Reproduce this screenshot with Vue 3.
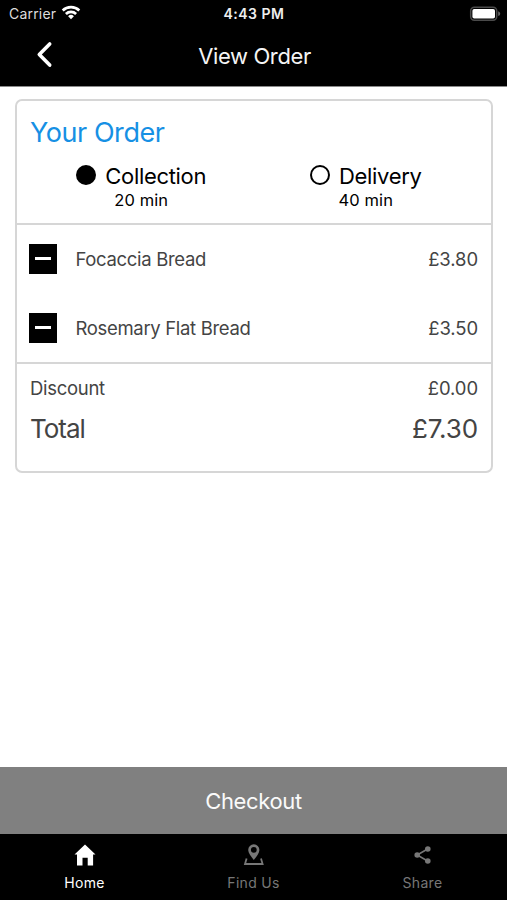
<script setup>
const options = [
  { name: 'Collection', time: '20 min', selected: true },
  { name: 'Delivery', time: '40 min', selected: false }
]

const items = [
  { name: 'Focaccia Bread', price: '£3.80' },
  { name: 'Rosemary Flat Bread', price: '£3.50' }
]
</script>

<template>
  <div class="screen">
    <header class="header">
      <div class="status">
        <div class="carrier">
          <span>Carrier</span>
          <svg class="wifi" width="20" height="15" viewBox="0 0 20 15" fill="none" stroke="#fff" stroke-width="2.7">
            <path d="M1.7 5.5a12 12 0 0 1 16.6 0" />
            <path d="M4.9 9a7.3 7.3 0 0 1 10.2 0" />
            <path d="M10 14.2 7.1 11.3a4.1 4.1 0 0 1 5.8 0Z" fill="#fff" stroke="none" />
          </svg>
        </div>
        <span class="clock">4:43 PM</span>
        <svg class="battery" width="32" height="16" viewBox="0 0 32 16">
          <rect x="1.7" y="1.2" width="26" height="13" rx="3.6" fill="none" stroke="#4a4a4a" stroke-width="1.5" />
          <rect x="3.4" y="2.9" width="22.6" height="9.6" rx="1.8" fill="#fff" />
          <path d="M29.2 5.3v4.8q2-.8 2-2.4t-2-2.4Z" fill="#666" />
        </svg>
      </div>
      <div class="nav">
        <svg class="back" width="17" height="27" viewBox="0 0 17 27" fill="none" stroke="#fff" stroke-width="3.6" stroke-linecap="round" stroke-linejoin="round">
          <path d="M13.7 3 3.3 13.5l10.4 10.6" />
        </svg>
        <h1 class="title">View Order</h1>
        <span></span>
      </div>
    </header>

    <main class="content">
      <section class="card">
        <div class="intro">
          <h2 class="heading">Your Order</h2>
          <div class="options">
            <div v-for="o in options" :key="o.name" class="option">
              <div class="choice">
                <span class="radio" :class="{ on: o.selected }"></span>
                <span class="choice-name">{{ o.name }}</span>
              </div>
              <span class="time">{{ o.time }}</span>
            </div>
          </div>
        </div>
        <ul class="items">
          <li v-for="i in items" :key="i.name" class="item">
            <button class="remove" type="button"><span class="dash"></span></button>
            <span class="item-name">{{ i.name }}</span>
            <span class="price">{{ i.price }}</span>
          </li>
        </ul>
        <div class="summary">
          <div class="row discount"><span class="discount-label">Discount</span><span class="price">£0.00</span></div>
          <div class="row total"><span class="total-label">Total</span><span class="total-price">£7.30</span></div>
        </div>
      </section>
    </main>

    <button class="checkout" type="button"><span>Checkout</span></button>

    <nav class="tabs">
      <div class="tab active">
        <svg class="icon" width="24" height="24" viewBox="0 0 24 24" fill="currentColor">
          <path d="M12 1.6 22.5 11.6H20.1V22.4H14.7V14.8H9.5V22.4H4V11.6H1.5Z" />
        </svg>
        <span>Home</span>
      </div>
      <div class="tab">
        <svg class="icon" width="24" height="24" viewBox="0 0 24 24" fill="currentColor">
          <path fill-rule="evenodd" d="M11.8 17C9 13.2 6.2 9.9 6.2 6.9a5.6 5.6 0 0 1 11.2 0c0 3-2.8 6.3-5.6 10.1ZM11.8 3.9a2.9 2.9 0 1 0 0 5.8a2.9 2.9 0 0 0 0-5.8Z" />
          <path d="M4.6 15.5 3 21H20.6L19 15.5" fill="none" stroke="currentColor" stroke-width="1.8" />
        </svg>
        <span>Find Us</span>
      </div>
      <div class="tab">
        <svg class="icon" width="24" height="24" viewBox="0 0 24 24" fill="currentColor">
          <path d="M16.6 6 6.2 12l10.4 6" fill="none" stroke="currentColor" stroke-width="1.6" />
          <circle cx="16.8" cy="6" r="2.8" />
          <circle cx="6.2" cy="12" r="2.8" />
          <circle cx="16.8" cy="18" r="2.8" />
        </svg>
        <span>Share</span>
      </div>
    </nav>
  </div>
</template>

<style>
body {
  margin: 0;
  background: #fff;
}
</style>

<style scoped>
.screen {
  display: flex;
  flex-direction: column;
  height: 900px;
  overflow: hidden;
  font-family: Inter, "Liberation Sans", sans-serif;
  color: #000;
}
h1, h2, ul {
  margin: 0;
  padding: 0;
  font-weight: 400;
}
button {
  border: 0;
  padding: 0;
  border-radius: 0;
  font-family: inherit;
}
svg {
  display: block;
}
span {
  white-space: nowrap;
}
.header {
  box-sizing: border-box;
  height: 87px;
  background: #000;
  border-bottom: 1px solid #8a8a8a;
  color: #fff;
}
.status {
  display: grid;
  grid-template-columns: 1fr auto 1fr;
  align-items: center;
  height: 27px;
  padding: 0 6px 0 9px;
  font-size: 14px;
}
.carrier {
  display: flex;
  align-items: center;
  gap: 5px;
  color: #ddd;
  letter-spacing: 0.2px;
}
.wifi {
  margin-top: -3px;
}
.clock {
  font-size: 14px;
  font-weight: 600;
  color: #eee;
  letter-spacing: 0.5px;
  padding-right: 2px;
}
.battery {
  justify-self: end;
}
.nav {
  display: grid;
  grid-template-columns: 1fr auto 1fr;
  align-items: center;
  height: 58px;
}
.back {
  margin: -4px 0 0 36px;
}
.title {
  font-size: 22px;
  line-height: 28px;
  color: #f5f5f5;
  padding-left: 2px;
  letter-spacing: -0.38px;
}
.content {
  flex: 1;
  padding: 12px 14px 0 15px;
}
.card {
  box-sizing: border-box;
  height: 374px;
  border: 2px solid #d6d6d6;
  border-radius: 7px;
}
.intro {
  box-sizing: border-box;
  height: 124px;
  padding-top: 15px;
  border-bottom: 2px solid #d6d6d6;
}
.heading {
  padding-left: 13px;
  font-size: 27px;
  line-height: 34px;
  letter-spacing: -0.45px;
  color: #1690e4;
}
.options {
  display: grid;
  grid-template-columns: 1fr 1fr;
  padding: 13px 13px 0 12px;
}
.option {
  display: flex;
  flex-direction: column;
  align-items: center;
}
.choice {
  display: flex;
  align-items: center;
  gap: 9px;
}
.radio {
  box-sizing: border-box;
  width: 20px;
  height: 20px;
  margin-top: -2px;
  border: 2px solid #000;
  border-radius: 50%;
}
.radio.on {
  background: #000;
}
.choice-name {
  font-size: 22px;
  line-height: 26px;
  letter-spacing: -0.32px;
}
.time {
  font-size: 16.5px;
  line-height: 22px;
  letter-spacing: 0.1px;
}
.items {
  box-sizing: border-box;
  height: 139px;
  list-style: none;
  border-bottom: 2px solid #d6d6d6;
}
.item {
  box-sizing: border-box;
  display: flex;
  align-items: center;
  height: 69px;
  padding: 0 13px 2px 12px;
  font-size: 18.5px;
  color: #444;
}
.remove {
  display: flex;
  justify-content: center;
  width: 28px;
  height: 30px;
  padding-top: 13px;
  box-sizing: border-box;
  background: #000;
}
.dash {
  width: 16px;
  height: 3px;
  background: #fff;
}
.item-name {
  flex: 1;
  padding-left: 18.5px;
  letter-spacing: -0.33px;
}
.price {
  letter-spacing: -0.1px;
}
.summary {
  padding: 11px 13px 0;
  color: #444;
}
.row {
  display: flex;
  justify-content: space-between;
}
.discount {
  font-size: 18.5px;
  line-height: 26px;
}
.discount-label {
  letter-spacing: -0.3px;
}
.total {
  padding-top: 11px;
  font-size: 26px;
  line-height: 34px;
}
.total-label {
  letter-spacing: -1px;
}
.total-price {
  letter-spacing: -0.1px;
}
.checkout {
  height: 67px;
  background: #808080;
  color: #fafafa;
  font-size: 22px;
  letter-spacing: -0.35px;
}
.tabs {
  display: grid;
  grid-template-columns: repeat(3, 1fr);
  height: 66px;
  background: #000;
}
.tab {
  display: flex;
  flex-direction: column;
  align-items: center;
  gap: 6px;
  padding-top: 9px;
  color: #777;
  font-size: 14px;
  line-height: 19px;
  letter-spacing: 0.3px;
}
.active {
  color: #fff;
}
</style>
